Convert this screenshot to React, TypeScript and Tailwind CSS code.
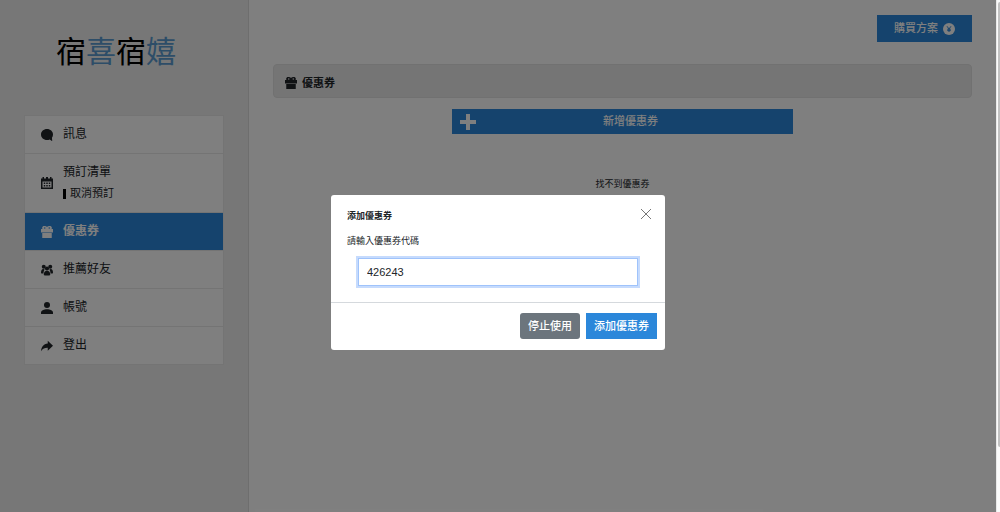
import { useState } from "react";
import type { FC, FormEvent, ReactNode } from "react";

type IconProps = { className?: string };

const ChatIcon: FC<IconProps> = ({ className }) => (
    <svg className={className} viewBox="0 0 24 24" fill="currentColor" aria-hidden="true">
        <path d="M12 0C5.200 0 0 4.800 0 11s5.200 11 12 11c2 0 3.800-.4 5.400-1.100L22.500 24.500l-.6-7C23.300 15.800 24 13.500 24 11 24 4.800 18.800 0 12 0z" />
    </svg>
);

const CalendarIcon: FC<IconProps> = ({ className }) => (
    <svg className={className} viewBox="0 0 24 24" fill="currentColor" aria-hidden="true">
        <path
            fillRule="evenodd"
            d="M0 3h3V0h3v3h4V0h4v3h4V0h3v3h3v21H0V3zm3 6v12h18V9H3z"
        />
        <path d="M5.500 11h3v3h-3zM10.500 11h3v3h-3zM15.500 11h3v3h-3zM5.500 16h3v3h-3zM10.500 16h3v3h-3zM15.500 16h3v3h-3z" />
    </svg>
);

const GiftIcon: FC<IconProps> = ({ className }) => (
    <svg className={className} viewBox="0 0 24 24" fill="currentColor" aria-hidden="true">
        <path
            fillRule="evenodd"
            d="M0 6h3A4 4 0 0 1 7.500 0c2 0 3.500.8 4.500 2.200C13 .8 14.500 0 16.500 0A4 4 0 0 1 21 6h3v7H0V6zm7.500-3.500a1.500 1.500 0 1 0 0 3 1.500 1.500 0 0 0 0-3zm9 0a1.500 1.500 0 1 0 0 3 1.500 1.500 0 0 0 0-3z"
        />
        <path d="M2.500 14h19v10h-19z" />
    </svg>
);

const FriendsIcon: FC<IconProps> = ({ className }) => (
    <svg className={className} viewBox="0 0 24 24" fill="currentColor" aria-hidden="true">
        <circle cx="5.500" cy="5.500" r="4" />
        <circle cx="18.500" cy="5.500" r="4" />
        <path d="M0 18c0-5 1.500-8 4.500-8 1.300 0 2.200.6 3 1.500C5.800 13 5 15 5 19H1zM24 18c0-5-1.500-8-4.500-8-1.300 0-2.200.6-3 1.500 1.700 1.500 2.500 3.500 2.500 7.500h4z" />
        <circle cx="12" cy="9" r="4.200" />
        <path d="M5.500 22c0-6 2.500-8.500 6.500-8.500s6.500 2.500 6.500 8.500l-2 1h-9z" />
    </svg>
);

const PersonIcon: FC<IconProps> = ({ className }) => (
    <svg className={className} viewBox="0 0 24 24" fill="currentColor" aria-hidden="true">
        <circle cx="12" cy="6" r="6" />
        <path d="M0 24v-3c0-4 6-6.500 12-6.500s12 2.500 12 6.500v3H0z" />
    </svg>
);

const ShareIcon: FC<IconProps> = ({ className }) => (
    <svg className={className} viewBox="0 0 24 24" fill="currentColor" aria-hidden="true">
        <path d="M13.500 1.500 24 11.500 13.500 21.500v-6C8 15.300 3.500 17 0 22.500.5 14 5 7.700 13.500 7V1.500z" />
    </svg>
);

type MenuItem = {
    label: string;
    icon: ReactNode;
    sub?: string;
    active?: boolean;
};

const menu: MenuItem[] = [
    { label: "訊息", icon: <ChatIcon className="size-3" /> },
    { label: "預訂清單", icon: <CalendarIcon className="size-3" />, sub: "取消預訂" },
    { label: "優惠券", icon: <GiftIcon className="size-3" />, active: true },
    { label: "推薦好友", icon: <FriendsIcon className="size-3" /> },
    { label: "帳號", icon: <PersonIcon className="size-3" /> },
    { label: "登出", icon: <ShareIcon className="size-3" /> },
];

const Sidebar: FC = () => (
    <aside className="w-1/4 shrink-0 border-r border-[#dcdcdc] bg-[#efefef] px-6">
        <a href="#home" className="mt-[30px] flex h-11 items-center pl-8 text-[30px] font-normal leading-none text-black">
            <span>宿</span>
            <span className="text-[#5b9bd0]">喜</span>
            <span>宿</span>
            <span className="text-[#5b9bd0]">嬉</span>
        </a>
        <nav className="mt-[41px] divide-y divide-[#e9e9e9] border border-[#e9e9e9] bg-white">
            {menu.map((item) => (
                <a
                    key={item.label}
                    href={`#${item.label}`}
                    className={
                        item.active
                            ? "flex items-center gap-2.5 bg-[#2b87da] px-4 py-2.5 font-bold text-white"
                            : "flex items-center gap-2.5 px-4 py-2.5 text-[#212529]"
                    }
                >
                    {item.icon}
                    <span className="text-[12px] leading-[17px]">
                        {item.label}
                        {item.sub && (
                            <span className="mt-1 flex items-center gap-1 text-[11px]">
                                <span className="h-2.5 w-[3px] bg-black" />
                                {item.sub}
                            </span>
                        )}
                    </span>
                </a>
            ))}
        </nav>
    </aside>
);

const Content: FC = () => (
    <main className="flex min-w-0 flex-1 flex-col px-6 pt-[15px]">
        <button
            type="button"
            className="flex h-[27px] items-center gap-[5px] self-end bg-[#2b87da] px-[17px] text-[11px] font-medium text-white"
        >
            購買方案
            <svg className="size-3" viewBox="0 0 24 24" aria-hidden="true">
                <circle cx="12" cy="12" r="12" fill="currentColor" />
                <path
                    d="M8 6.500l4 5.500 4-5.500M12 12v6M8.500 12.500h7M8.500 15.200h7"
                    stroke="#2b87da"
                    strokeWidth="2"
                    fill="none"
                />
            </svg>
        </button>
        <h1 className="mt-[22px] flex h-[34px] items-center gap-[5px] rounded-sm border border-[#e2e2e2] bg-[#ebebeb] px-[11px] pt-1 text-[11px] font-bold text-[#212529]">
            <GiftIcon className="size-3" />
            優惠券
        </h1>
        <button
            type="button"
            className="mt-[11px] flex h-[25px] w-[341px] max-w-full items-center self-center bg-[#2b87da] px-2 text-[11px] font-medium text-white"
        >
            <svg className="size-4" viewBox="0 0 16 16" fill="currentColor" aria-hidden="true">
                <path d="M6 0h4v6h6v4h-6v6H6v-6H0V6h6z" />
            </svg>
            <span className="flex-1">新增優惠券</span>
        </button>
        <p className="mt-[42px] text-center text-[9px] leading-4 text-[#212529]">找不到優惠券</p>
    </main>
);

const CouponDialog: FC = () => {
    const [code, setCode] = useState("426243");

    const handleSubmit = (e: FormEvent<HTMLFormElement>): void => {
        e.preventDefault();
    };

    return (
        <div className="absolute inset-0 flex items-start justify-center bg-black/50 pt-[195px]">
            <form
                role="dialog"
                aria-labelledby="coupon-title"
                onSubmit={handleSubmit}
                className="w-[334px] max-w-full rounded-[3px] bg-white text-[#212529]"
            >
                <div className="flex items-start justify-between px-[13px] pt-[13px]">
                    <h2 id="coupon-title" className="pl-[3px] text-[9px] font-bold leading-4">
                        添加優惠券
                    </h2>
                    <button type="button" aria-label="關閉" className="text-[#777777]">
                        <svg className="size-3" viewBox="0 0 12 12" fill="none" stroke="currentColor" aria-hidden="true">
                            <path d="M1 1l10 10M11 1L1 11" />
                        </svg>
                    </button>
                </div>
                <div className="px-4 pb-4 pt-[9px]">
                    <label htmlFor="coupon-code" className="block text-[9px] leading-4">
                        請輸入優惠券代碼
                    </label>
                    <div className="mt-[9px] px-[11px]">
                        <input
                            id="coupon-code"
                            type="text"
                            value={code}
                            onChange={(e) => setCode(e.target.value)}
                            className="h-7 w-full border border-[#9fc3fb] px-2 text-[11px] text-[#212529] outline-none ring-2 ring-[#c6dbfd]"
                        />
                    </div>
                </div>
                <div className="flex justify-end gap-1.5 border-t border-[#d5d9dd] px-2 pb-[11px] pt-2.5 text-[11px] font-medium text-white">
                    <button type="button" className="h-[26px] rounded-[3px] bg-[#6c757d] px-2">
                        停止使用
                    </button>
                    <button type="submit" className="h-[26px] bg-[#2b87da] px-2">
                        添加優惠券
                    </button>
                </div>
            </form>
        </div>
    );
};

const App: FC = () => (
    <div className="flex min-h-screen bg-white font-['Liberation_Sans','Noto_Sans_CJK_TC',sans-serif]">
        <div className="relative flex min-w-0 flex-1">
            <Sidebar />
            <Content />
            <CouponDialog />
        </div>
        <div className="w-1 border-l border-[#e8e8e8] bg-[#fafafa] pl-px">
            <div className="mt-0.5 h-[445px] rounded-l-sm bg-[#c1c1c1]" />
        </div>
    </div>
);

export default App;
